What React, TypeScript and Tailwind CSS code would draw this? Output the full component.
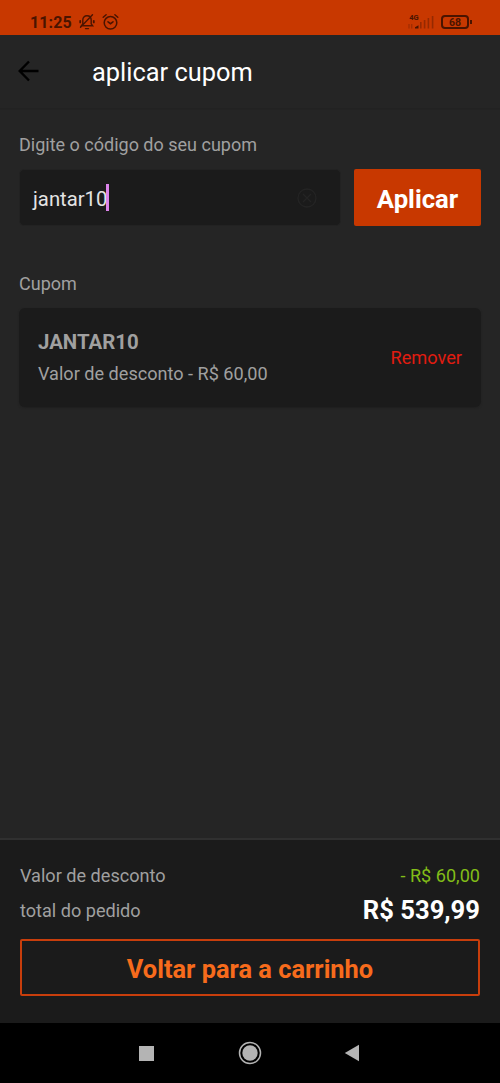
const DISCOUNT = "R$ 60,00";
const TOTAL = "R$ 539,99";

function StatusBar() {
  return (
    <div className="flex h-[35px] shrink-0 items-start bg-[#c83800] pt-[13px] text-[#4a1400]">
      <span className="ml-[30px] w-[42px] text-[16px] leading-[19px] font-bold tracking-[0.1px] whitespace-nowrap">11:25</span>
      <svg className="ml-[7px]" width="16" height="18" viewBox="0 0 16 18" fill="none" stroke="currentColor" strokeWidth="1.4" strokeLinecap="round">
        <path d="M2.300 12.800h11.400l-1.500-2V7c0-2.500-1.600-4.200-4.200-4.200S3.800 4.500 3.800 7v3.800zM6.500 15.600h3M13.500 1.800 1.500 14.300" />
        <path strokeWidth="1.8" d="M1.200 7.800v1.600M14.800 7.800v1.600" />
      </svg>
      <svg className="ml-[7px]" width="17" height="18" viewBox="0 0 17 18" fill="none" stroke="currentColor" strokeWidth="1.5" strokeLinecap="round">
        <circle cx="8.500" cy="9.800" r="6.300" />
        <path d="m1.200 4.200 2.900-2.500M15.800 4.200l-2.900-2.500M6 8.800l2.500 1.900L11 8.800" />
      </svg>
      <svg className="ml-auto" width="28" height="17" viewBox="0 0 28 17" fill="currentColor">
        <text x="1.300" y="7" fontSize="7.500" fontWeight="700">4G</text>
        <path d="M7 15.500v-1.200l3.500-2v3.200z" />
        <path opacity=".4" d="M12 15.500V9h1.600v6.500zM15.800 15.500V7h1.600v8.500zM19.600 15.500V5h1.600v10.500zM23.800 15.500V3h1.600v12.500zM.5 11h1v4.500h-1zM3.300 11h1v4.500h-1z" />
      </svg>
      <div className="mt-[2px] ml-[5px] flex h-[14px] w-[28px] items-center justify-center rounded-[4px] border-2 border-current pt-[2px] text-[10.5px] leading-none font-bold">68</div>
      <div className="mt-[7px] mr-[28px] ml-px h-1 w-[2px] bg-current" />
    </div>
  );
}

function Header() {
  return (
    <header className="flex h-[73px] shrink-0 items-center pl-[18px] shadow-[0_1px_1px_#222222]">
      <button type="button" aria-label="Voltar" className="pb-[2px] text-black">
        <svg width="22" height="22" viewBox="0 0 22 22" fill="none" stroke="currentColor" strokeWidth="2.400">
          <path d="M20.500 11H2M11 1.500 1.700 11l9.300 9.500" />
        </svg>
      </button>
      <h1 className="ml-[52px] pt-[2px] text-[25.400px] text-white">aplicar cupom</h1>
    </header>
  );
}

function CouponForm() {
  return (
    <section>
      <p className="text-[18px] leading-6">Digite o código do seu cupom</p>
      <div className="mt-3 flex h-[57px] gap-[13px]">
        <div className="flex flex-1 items-center rounded-[5px] border border-[#222222] bg-[#1b1b1b] pr-[23px] pl-[13px]">
          <span className="pt-[3px] text-[20.300px] text-[#e4e4e4]">jantar10</span>
          <span className="-ml-px h-[27px] w-[3px] bg-[#dc83ea]" />
          <svg className="ml-auto" width="20" height="20" viewBox="0 0 20 20" fill="none" stroke="#242424" strokeWidth="1.300">
            <circle cx="10" cy="10" r="9" />
            <path d="m6 6 8 8M14 6l-8 8" />
          </svg>
        </div>
        <button type="button" className="w-[127px] rounded-[2px] bg-[#c83800] pt-[3px] text-[25.700px] font-bold text-white">Aplicar</button>
      </div>
    </section>
  );
}

function CouponCard() {
  return (
    <section className="mt-[46px]">
      <p className="text-[18px] leading-6">Cupom</p>
      <div className="mt-3 flex h-[99px] items-center justify-between rounded-[6px] bg-[#1b1b1b] px-[19px] shadow-[0_1px_2px_#1f1f1f]">
        <div>
          <p className="text-[20.400px] leading-8 font-bold">JANTAR10</p>
          <p className="text-[18.100px] leading-8">Valor de desconto - {DISCOUNT}</p>
        </div>
        <button type="button" className="text-[18.200px] text-[#e01c10]">Remover</button>
      </div>
    </section>
  );
}

function Summary() {
  return (
    <footer className="h-[185px] shrink-0 border-t-2 border-[#303030] bg-[#1b1b1b] px-5 pt-[18px]">
      <div className="flex h-[35px] items-center justify-between text-[18.100px]">
        <span>Valor de desconto</span>
        <span className="text-[#82bd18]">- {DISCOUNT}</span>
      </div>
      <div className="flex h-[35px] items-center justify-between text-[18.100px]">
        <span>total do pedido</span>
        <span className="text-[25.600px] font-bold text-white">{TOTAL}</span>
      </div>
      <button type="button" className="mt-[11px] h-[57px] w-full rounded-[2px] border-2 border-[#c83e0c] pt-[3px] text-[25.400px] font-bold text-[#f76b1c]">Voltar para a carrinho</button>
    </footer>
  );
}

function NavigationBar() {
  return (
    <nav className="flex h-[60px] shrink-0 items-center bg-black text-[#b4b4b4]">
      <div className="ml-[139px] size-[15px] bg-current" />
      <svg className="ml-[84px]" width="24" height="24" viewBox="0 0 24 24" fill="currentColor">
        <circle cx="12" cy="12" r="7.700" />
        <circle cx="12" cy="12" r="10.500" fill="none" stroke="currentColor" strokeWidth="1.500" />
      </svg>
      <svg className="ml-[82px]" width="16" height="18" viewBox="0 0 16 18" fill="currentColor">
        <path d="M15 .8v16.400L.8 9z" />
      </svg>
    </nav>
  );
}

export default function App() {
  return (
    <div className="flex h-[1083px] w-[500px] flex-col overflow-hidden bg-[#252525] font-['Roboto',sans-serif] text-[#a0a0a0]">
      <StatusBar />
      <Header />
      <main className="flex-1 px-[19px] pt-[25px]">
        <CouponForm />
        <CouponCard />
      </main>
      <Summary />
      <NavigationBar />
    </div>
  );
}
